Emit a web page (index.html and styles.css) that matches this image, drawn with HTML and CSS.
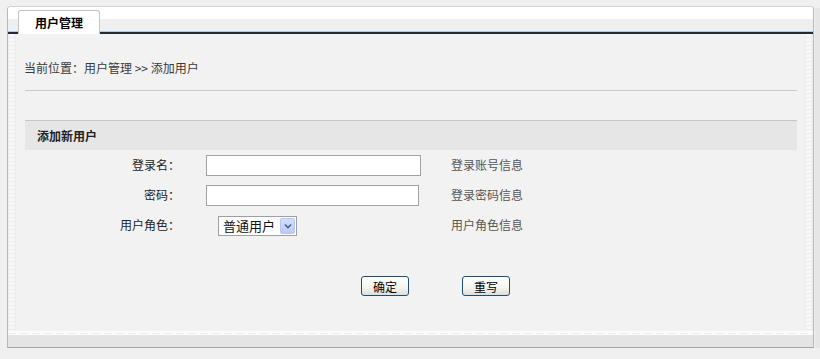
FILE: index.html
```html
<!DOCTYPE html>
<html lang="zh-CN">
<head>
<meta charset="utf-8">
<title>添加用户</title>
<link rel="stylesheet" href="styles.css">
</head>
<body>
<div class="frame">
  <div class="tabbar">
    <div class="tab">用户管理</div>
  </div>
  <div class="body">
    <div class="side"></div>
    <div class="main">
      <div class="crumb">当前位置：用户管理 &gt;&gt; 添加用户</div>
      <div class="rule"></div>
      <div class="section-title">添加新用户</div>
      <form class="form">
        <div class="row">
          <label class="label">登录名：</label>
          <div class="field"><input class="text w1" type="text"></div>
          <div class="hint">登录账号信息</div>
        </div>
        <div class="row">
          <label class="label">密码：</label>
          <div class="field"><input class="text w2" type="password"></div>
          <div class="hint">登录密码信息</div>
        </div>
        <div class="row">
          <label class="label">用户角色：</label>
          <div class="field">
            <div class="select-wrap">
              <select class="select"><option>普通用户</option><option>管理员</option></select>
              <span class="arrow"><svg width="8" height="6" viewBox="0 0 8 6"><path d="M1 1.5 L4 4.5 L7 1.5" fill="none" stroke="#4d6185" stroke-width="1.6"/></svg></span>
            </div>
          </div>
          <div class="hint">用户角色信息</div>
        </div>
        <div class="actions">
          <button type="button" class="btn">确定</button>
          <button type="reset" class="btn">重写</button>
        </div>
      </form>
    </div>
    <div class="side"></div>
  </div>
  <div class="foot"></div>
</div>
<div class="strip"></div>
</body>
</html>
```
FILE: styles.css
```css
* { box-sizing: border-box; }
html, body { margin: 0; padding: 0; }
body {
  background: #f0f0f0;
  font-family: "Noto Sans CJK SC", "Liberation Sans", sans-serif;
  font-size: 12px;
  color: #222;
  width: 820px;
  height: 359px;
  overflow: hidden;
  position: relative;
}
.frame {
  margin: 6px 0 0 7px;
  width: 807px;
  height: 342px;
  border: 1px solid #b8b8b8;
  border-top-color: #d2d2d2;
  border-bottom-color: #a4a4a4;
  border-radius: 4px 4px 0 0;
  display: flex;
  flex-direction: column;
  background: #f2f2f2;
}
.tabbar {
  height: 27px;
  flex: none;
  display: flex;
  align-items: flex-end;
  padding-left: 10px;
  border-radius: 3px 3px 0 0;
  background: linear-gradient(to bottom,
    #ffffff 0, #ffffff 12px,
    #efefef 12px, #efefef 24px,
    #a9c9e8 24px, #a9c9e8 25px,
    #252a32 25px, #252a32 27px);
}
.tab {
  width: 82px;
  height: 24px;
  background: #fff;
  border: 1px solid #c4c4c4;
  border-bottom: none;
  border-radius: 3px 3px 0 0;
  font-weight: bold;
  color: #000;
  text-align: center;
  line-height: 23px;
}
.body {
  flex: 1;
  display: flex;
  min-height: 0;
}
.side {
  width: 8px;
  flex: none;
  background:
    repeating-linear-gradient(to bottom, #f8f8f8 0, #f8f8f8 3px, #ededed 3px, #ededed 4px);
  background-size: 5px 100%;
  background-repeat: no-repeat;
  background-position: 1px 0;
  background-color: #efefef;
}
.main {
  flex: 1;
  padding-top: 24px;
  background: #f2f2f2;
}
.crumb {
  line-height: 20px;
  height: 20px;
  padding-left: 8px;
  color: #3a3a3a;
}
.rule {
  margin: 12px 8px 0 9px;
  height: 1px;
  background: #c8c8c8;
}
.section-title {
  margin: 29px 8px 0 9px;
  height: 30px;
  border-top: 1px solid #c6c6c6;
  background: #e6e6e6;
  padding-left: 12px;
  line-height: 29px;
  font-weight: bold;
  color: #222;
}
.form { margin: 0; }
.row {
  display: grid;
  grid-template-columns: 164px 271px 1fr;
  height: 30px;
  align-items: center;
}
.label {
  text-align: right;
  color: #222;
  line-height: 20px;
}
.field {
  padding-left: 26px;
  height: 21px;
  display: flex;
  align-items: center;
}
.text {
  height: 21px;
  border: 1px solid #a2a2a2;
  background: #fff;
  padding: 0 3px;
  font: inherit;
  margin: 0;
  outline: none;
}
.w1 { width: 215px; }
.w2 { width: 213px; }
.hint {
  color: #555;
  line-height: 20px;
}
.select-wrap {
  position: relative;
  margin-left: 12px;
  width: 79px;
  height: 20px;
  margin-top: 1px;
}
.select {
  -webkit-appearance: none;
  appearance: none;
  width: 79px;
  height: 20px;
  border: 1px solid #a0a0a0;
  background: #fff;
  font: inherit;
  font-size: 13px;
  color: #111;
  padding: 0 0 0 4px;
  margin: 0;
  line-height: 18px;
  outline: none;
  border-radius: 0;
}
.arrow {
  position: absolute;
  right: 2px;
  top: 2px;
  width: 15px;
  height: 16px;
  background: linear-gradient(to bottom, #d2defd, #b9cbf8);
  border: 1px solid #b3c6f4;
  border-radius: 2px;
  display: flex;
  align-items: center;
  justify-content: center;
  pointer-events: none;
}
.actions {
  display: flex;
  gap: 53px;
  padding-left: 345px;
  margin-top: 36px;
}
.btn {
  width: 48px;
  height: 20px;
  border: 1px solid #1b4d7a;
  border-radius: 3px;
  background: linear-gradient(to bottom, #ffffff 0, #f6f6f2 55%, #e2ded4 100%);
  font: inherit;
  font-size: 12px;
  color: #000;
  padding: 0;
  line-height: 17px;
  margin: 0;
}
.foot {
  height: 16px;
  flex: none;
  border-top: 2px solid #fbfbfb;
  background:
    repeating-linear-gradient(to right, #ececec 0, #ececec 8px, #fbfbfb 8px, #fbfbfb 12px) 0 0 / 100% 1px no-repeat,
    linear-gradient(to bottom, #fbfbfb 0, #fbfbfb 2px, #e4e4e4 2px);
}
.strip {
  position: absolute;
  left: 815px;
  top: 8px;
  width: 5px;
  height: 340px;
  background: #e6e6e6;
}
```
